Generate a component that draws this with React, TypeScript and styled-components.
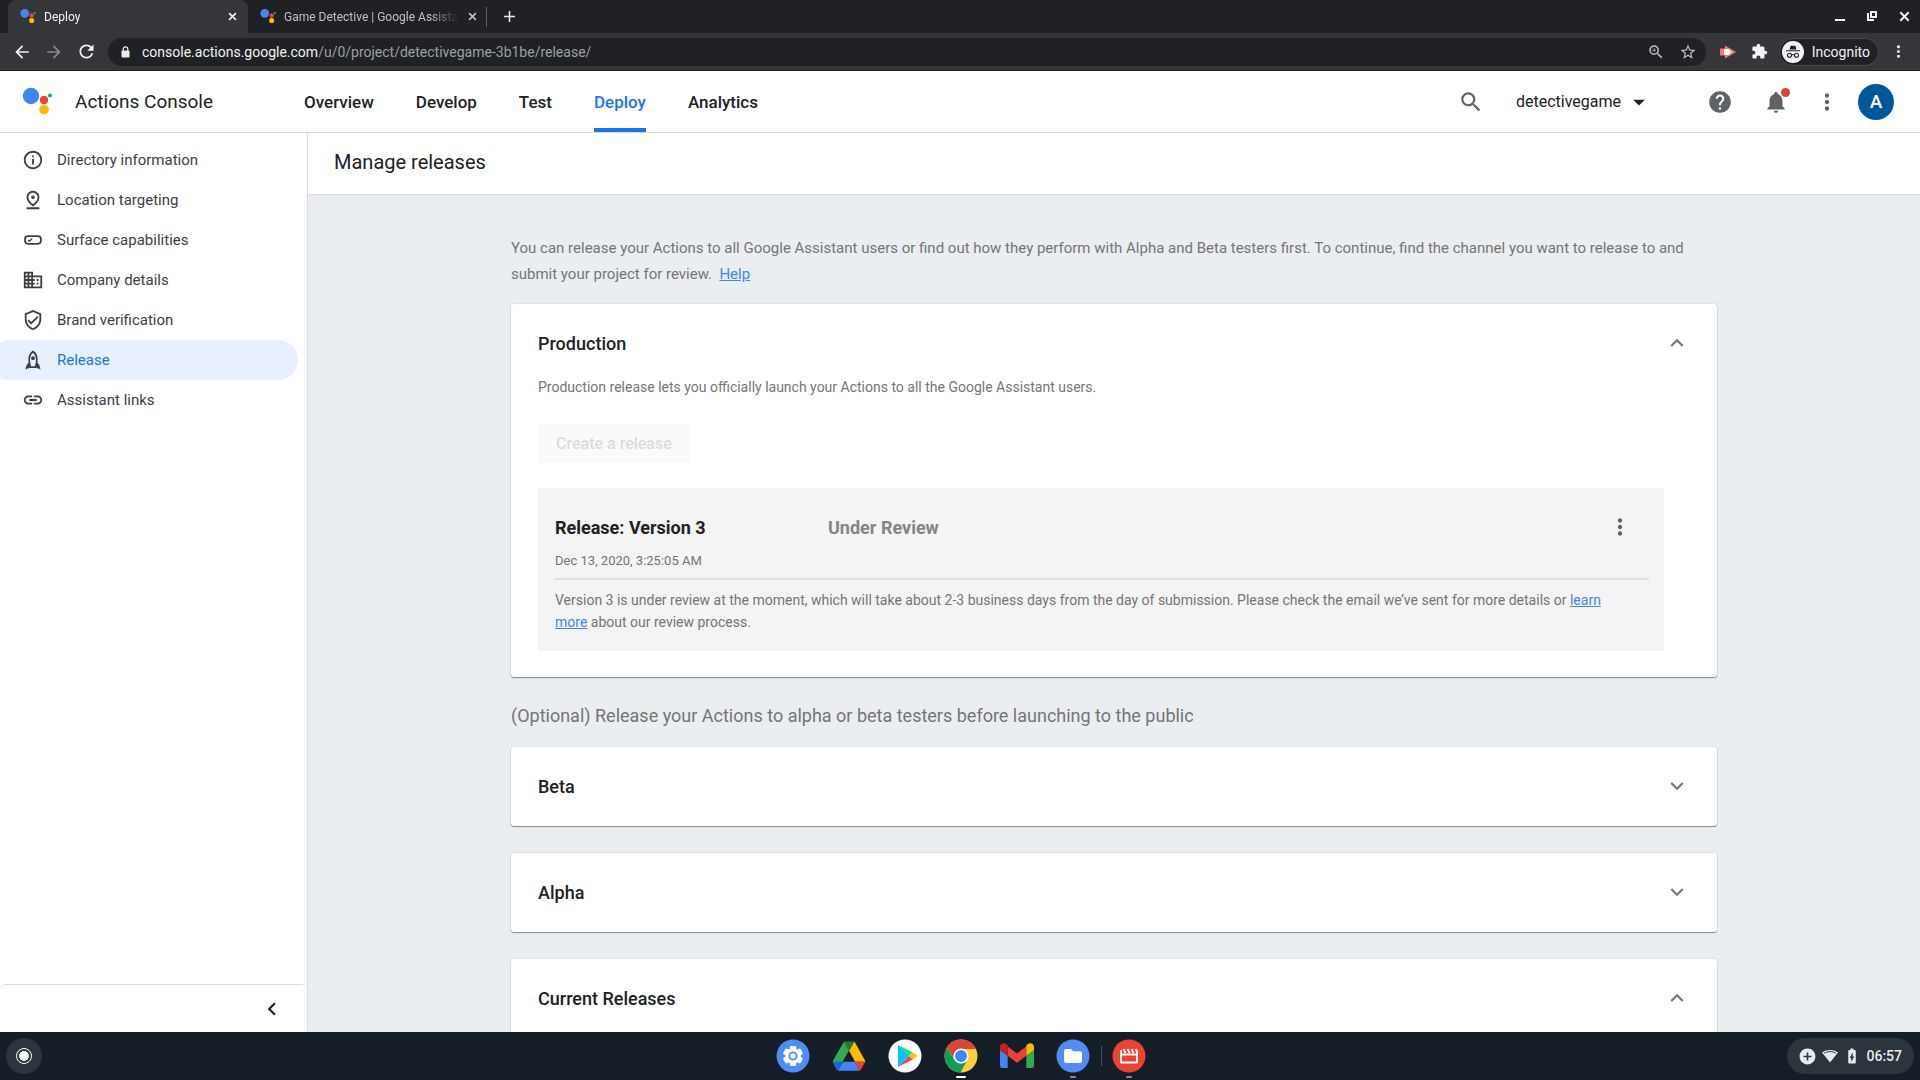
import React from "react";
import styled, { createGlobalStyle } from "styled-components";
import {
  MdInfoOutline, MdOutlinePinDrop, MdDomain, MdOutlineVerifiedUser, MdLink, MdHelp, MdNotifications,
  MdMoreVert, MdSearch, MdArrowDropDown, MdZoomIn, MdStarBorder, MdExtension, MdArrowBack,
  MdArrowForward, MdRefresh, MdAdd, MdExpandLess, MdExpandMore, MdChevronLeft,
  MdAddCircle, MdBatteryChargingFull,
} from "react-icons/md";

const Global = createGlobalStyle`
  * { box-sizing: border-box; }
  body { margin: 0; font-family: Roboto, "Liberation Sans", sans-serif; color: #202124; overflow: hidden; }
  h1, h2, p { margin: 0; }
  button { border: 0; padding: 0; background: none; color: inherit; font: inherit; }
  a { color: inherit; }
  svg { display: block; flex: none; }
`;

const Screen = styled.div`
  height: 100vh;
  display: flex;
  flex-direction: column;
`;

const IconButton = styled.button<{ $size?: number }>`
  flex: none;
  display: flex;
  align-items: center;
  justify-content: center;
  width: ${(p) => p.$size ?? 32}px;
  height: ${(p) => p.$size ?? 32}px;
`;

/* Browser window */
const TabStrip = styled.div`
  flex: none;
  display: flex;
  height: 33px;
  padding-left: 8px;
  background: #202124;
  color: #e8eaed;
`;
const Tab = styled.div<{ $active?: boolean }>`
  display: flex;
  align-items: center;
  gap: 7px;
  width: 240px;
  padding: 0 8px 0 12px;
  border-radius: 8px 8px 0 0;
  font-size: 12px;
  color: ${(p) => (p.$active ? "#f1f3f4" : "#bdc1c6")};
  background: ${(p) => (p.$active ? "#35363a" : "transparent")};
`;
const TabTitle = styled.span`
  flex: 1;
  white-space: nowrap;
  mask-image: linear-gradient(to right, #000 84%, transparent);
`;
const StripDivider = styled.i`
  align-self: center;
  width: 1px;
  height: 20px;
  margin: 0 6px 0 -2px;
  background: #5f6368;
`;
const WindowButtons = styled.div`
  display: flex;
  margin-left: auto;
  color: #f1f3f4;
`;
const Toolbar = styled.div`
  flex: none;
  display: flex;
  align-items: center;
  height: 38px;
  padding: 0 6px;
  background: #35363a;
  border-bottom: 1px solid #202124;
  color: #f1f3f4;
`;
const Address = styled.div`
  flex: 1;
  display: flex;
  align-items: center;
  height: 28px;
  margin: 0 6px;
  padding: 0 2px 0 13px;
  border-radius: 14px;
  background: #202124;
  font-size: 14px;
  color: #9aa0a6;
`;
const Url = styled.span`
  flex: 1;
  padding-left: 12px;
  b { font-weight: 400; color: #f1f3f4; }
`;
const AddressTools = styled.div`
  display: flex;
  color: #bdc1c6;
`;
const Incognito = styled.button`
  display: flex;
  align-items: center;
  gap: 8px;
  height: 28px;
  margin: 0 3px;
  padding: 0 8px 0 2px;
  border: 1px solid #46474b;
  border-radius: 14px;
  background: #202124;
  font-size: 14px;
`;

/* Console header */
const Header = styled.header`
  flex: none;
  display: flex;
  align-items: center;
  height: 62px;
  padding: 0 26px 0 22px;
  border-bottom: 1px solid #dadce0;
  background: #fff;
`;
const Product = styled.div`
  display: flex;
  align-items: center;
  gap: 21px;
  width: 282px;
  font-size: 19px;
`;
const Nav = styled.nav`
  flex: 1;
  display: flex;
  gap: 42px;
  height: 100%;
`;
const NavLink = styled.a<{ $active?: boolean }>`
  display: flex;
  align-items: center;
  border-bottom: 4px solid ${(p) => (p.$active ? "#1a73e8" : "transparent")};
  border-top: 4px solid transparent;
  font-size: 17px;
  font-weight: 500;
  text-decoration: none;
  color: ${(p) => (p.$active ? "#1a73e8" : "#202124")};
`;
const HeaderTools = styled.div`
  display: flex;
  align-items: center;
  gap: 15px;
  color: #5f6368;
`;
const ProjectMenu = styled.button`
  display: flex;
  align-items: center;
  gap: 4px;
  margin: 0 36px 0 14px;
  font-size: 16px;
  color: #202124;
`;
const Bell = styled.button`
  position: relative;
  width: 40px;
  height: 40px;
  margin-left: 5px;
  display: grid;
  place-items: center;
  &::after {
    content: "";
    position: absolute;
    top: 6px;
    right: 6px;
    width: 9px;
    height: 9px;
    border-radius: 50%;
    background: #db4437;
  }
`;
const Avatar = styled.button`
  width: 36px;
  height: 36px;
  border-radius: 50%;
  background: #01579b;
  color: #fff;
  font-size: 19px;
  font-weight: 500;
`;

/* Body */
const Body = styled.div`
  flex: 1;
  min-height: 0;
  display: flex;
`;
const Sidebar = styled.aside`
  flex: none;
  display: flex;
  flex-direction: column;
  width: 308px;
  border-right: 1px solid #dadce0;
  background: #fff;
`;
const SideList = styled.nav`
  flex: 1;
  padding: 7px 9px 0 0;
`;
const SideLink = styled.a<{ $active?: boolean }>`
  display: flex;
  align-items: center;
  gap: 13px;
  height: 40px;
  padding-left: 22px;
  border-radius: 6px 20px 20px 6px;
  background: ${(p) => (p.$active ? "#e8f0fe" : "transparent")};
  color: ${(p) => (p.$active ? "#1a73e8" : "#3c4043")};
  font-size: 15px;
  text-decoration: none;
  svg { color: #3c4043; }
`;
const SideFooter = styled.div`
  display: flex;
  justify-content: flex-end;
  align-items: center;
  height: 48px;
  padding-right: 19px;
  border-top: 1px solid #dadce0;
  border-radius: 6px 6px 0 0;
`;
const Main = styled.main`
  flex: 1;
  min-width: 0;
  display: flex;
  flex-direction: column;
`;
const TitleBar = styled.div`
  flex: none;
  height: 62px;
  padding: 0 26px;
  border-bottom: 1px solid #dadce0;
  background: #fff;
  h1 { font-size: 20px; line-height: 58px; font-weight: 400; }
`;
const Scroller = styled.div`
  flex: 1;
  overflow: hidden;
  padding: 40px 24px 0;
  background: #eaeef1;
`;
const Column = styled.div`
  max-width: 1206px;
  margin: 0 auto;
`;
const Intro = styled.p`
  margin-bottom: 17px;
  font-size: 15px;
  line-height: 26px;
  color: #757575;
`;
const TextLink = styled.a`
  color: #4285f4;
  text-decoration: underline;
`;
const Card = styled.section`
  margin-bottom: 27px;
  padding: 8px 26px 7px 27px;
  border-radius: 3px;
  background: #fff;
  box-shadow: 0 1px 1px rgba(0, 0, 0, 0.4), 0 0 2px rgba(0, 0, 0, 0.16);
`;
const CardHead = styled.div`
  display: flex;
  align-items: center;
  justify-content: space-between;
  height: 64px;
  padding-bottom: 2px;
  color: #757575;
  h2 { font-size: 18px; font-weight: 500; color: #202124; }
`;
const CardText = styled.p`
  font-size: 14px;
  line-height: 22px;
  color: #757575;
`;
const CreateButton = styled.button`
  height: 39px;
  margin: 26px 0 25px;
  padding: 0 18px;
  border-radius: 4px;
  background: #fafafa;
  color: #dadce0;
  font-size: 16px;
  font-weight: 500;
`;
const Release = styled.article`
  margin: 0 27px 19px 0;
  padding: 22px 15px 18px 17px;
  background: #f4f4f4;
`;
const ReleaseHead = styled.div`
  display: grid;
  grid-template-columns: 273px 1fr 32px;
  align-items: center;
  height: 34px;
  padding-right: 13px;
  color: #5f6368;
  font-size: 18px;
  font-weight: 700;
  h2 { font-size: 18px; font-weight: 700; color: #202124; }
  span { color: #80868b; }
`;
const ReleaseDate = styled.p`
  padding: 7px 0;
  border-bottom: 2px solid #e0e0e0;
  margin-bottom: 9px;
  font-size: 13px;
  line-height: 20px;
  color: #757575;
`;
const ReleaseNote = styled(CardText)`
  padding-right: 24px;
`;
const Optional = styled.p`
  margin-bottom: 20px;
  font-size: 18px;
  line-height: 23px;
  color: #757575;
`;

/* System shelf */
const Shelf = styled.footer`
  flex: none;
  display: grid;
  grid-template-columns: 1fr auto 1fr;
  align-items: center;
  height: 48px;
  padding: 0 6px;
  background: #151e27;
`;
const Launcher = styled.button`
  display: grid;
  place-items: center;
  width: 36px;
  height: 36px;
  border-radius: 50%;
  background: #2c353d;
`;
const Apps = styled.div`
  display: flex;
  align-items: center;
  padding-left: 2px;
`;
const AppButton = styled.button<{ $mark?: string }>`
  display: flex;
  flex-direction: column;
  align-items: center;
  width: 56px;
  height: 48px;
  padding-top: 7px;
  &::after {
    content: "";
    width: ${(p) => (p.$mark === "#fff" ? 10 : 6)}px;
    height: 2px;
    margin-top: 3px;
    border-radius: 1px;
    background: ${(p) => p.$mark ?? "transparent"};
  }
`;
const ShelfDivider = styled.i`
  width: 1px;
  height: 20px;
  margin-right: -1px;
  background: #454d54;
`;
const Status = styled.button`
  justify-self: end;
  display: flex;
  align-items: center;
  gap: 5px;
  height: 36px;
  padding: 0 12px 0 11px;
  border-radius: 18px;
  background: #2c353d;
  color: #e8eaed;
  font-size: 14px;
  font-weight: 500;
`;

const AssistantLogo = ({ size }: { size: number }) => (
  <svg width={size} height={size} viewBox="0 0 32 32">
    <circle cx="9" cy="10" r="8.200" fill="#4285f4" />
    <circle cx="22" cy="14" r="4.200" fill="#ea4335" />
    <circle cx="22" cy="23.500" r="4.800" fill="#fbbc04" />
    <circle cx="28" cy="9.500" r="2.100" fill="#34a853" />
  </svg>
);
const LockIcon = () => (
  <svg width="9" height="12" viewBox="0 0 9 12" fill="none">
    <path d="M2.200 5V3.200a2.300 2.300 0 0 1 4.600 0V5" stroke="#e8eaed" strokeWidth="1.200" />
    <rect x="0.500" y="4.500" width="8" height="7" rx="1" fill="#e8eaed" />
  </svg>
);
const CrossIcon = ({ size }: { size: number }) => (
  <svg width={size} height={size} viewBox="0 0 10 10" fill="none" stroke="currentColor" strokeWidth="1.800">
    <path d="M1.200 1.200l7.600 7.600M8.800 1.200L1.200 8.800" />
  </svg>
);
const SurfaceIcon = () => (
  <svg width="22" height="22" viewBox="0 0 22 22" fill="none" stroke="currentColor">
    <rect x="3" y="7.200" width="16" height="7.600" rx="3.200" strokeWidth="1.800" />
    <path d="M6 11l1.400 1.400L10.200 9.500" strokeWidth="1.200" />
  </svg>
);
const RocketIcon = () => (
  <svg width="22" height="22" viewBox="0 0 22 22" fill="none" stroke="currentColor">
    <path d="M11 2.500C8.600 4.400 7.200 7.200 7.200 10.500c0 3 .5 5.500 1.200 7.700h5.200c.7-2.200 1.200-4.700 1.200-7.700C14.800 7.200 13.400 4.400 11 2.500z" strokeWidth="1.700" />
    <circle cx="11" cy="9.200" r="1.900" fill="currentColor" stroke="none" />
    <path d="M6.800 13.500C5 15 3.900 17.200 3.500 20.500l1.500-.6.800-1.200.7 1 1.500-1.200zM15.200 13.500c1.800 1.500 2.900 3.700 3.300 7l-1.500-.6-.8-1.200-.7 1-1.500-1.200z" fill="currentColor" stroke="none" />
  </svg>
);
const MinimizeIcon = () => (
  <svg width="12" height="12" viewBox="0 0 12 12">
    <path d="M1 9h10v2H1z" fill="currentColor" />
  </svg>
);
const RestoreIcon = () => (
  <svg width="12" height="12" viewBox="0 0 12 12" fill="none" stroke="currentColor" strokeWidth="2">
    <path d="M5 2h5v5H5z" />
    <path d="M2 3v7h6" />
  </svg>
);
const IncognitoIcon = () => (
  <svg width="22" height="22" viewBox="0 0 22 22">
    <circle cx="11" cy="11" r="11" fill="#f1f3f4" />
    <path d="M7.500 8.500l1-3.300c.2-.6.700-.7 1.200-.5l1.300.3 1.300-.3c.5-.2 1 0 1.200.5l1 3.300zM4 9.300h14v1H4z" fill="#202124" />
    <g fill="none" stroke="#202124" strokeWidth="1.100">
      <circle cx="7.500" cy="14.300" r="2" />
      <circle cx="14.500" cy="14.300" r="2" />
      <path d="M9.500 14c1-.6 2-.6 3 0" />
    </g>
  </svg>
);
const ArrowExtension = () => (
  <svg width="16" height="14" viewBox="0 0 16 14">
    <path d="M0 3.500h5V.5L16 7 5 13.500v-3H0z" fill="#f0797c" />
    <path d="M4 4h5l4 3-4 3H4z" fill="#fff" />
    <path d="M9 3l7 4-7 4 1.500-4z" fill="#ea6a62" opacity=".5" />
  </svg>
);
const WifiIcon = () => (
  <svg width="16" height="16" viewBox="0 0 16 16">
    <path d="M0 4.500C4.500 1.200 11.500 1.200 16 4.500L8 14.500z" fill="#e8eaed" />
    <path d="M2 5.300c3.500-2.200 8.500-2.200 12 0" fill="none" stroke="#2c353d" strokeWidth="1" />
  </svg>
);
const SettingsApp = () => (
  <svg width="34" height="34" viewBox="0 0 34 34">
    <circle cx="17" cy="17" r="16.500" fill="#4f8df5" />
    <g fill="#fff">
      {[0, 60, 120].map((a) => (
        <rect key={a} x="13.800" y="7" width="6.400" height="20" rx="1.200" transform={`rotate(${a} 17 17)`} />
      ))}
      <circle cx="17" cy="17" r="7.800" />
    </g>
    <circle cx="17" cy="17" r="3.600" fill="#fff" stroke="#4f8df5" strokeWidth="1.800" />
  </svg>
);
const DriveApp = () => (
  <svg width="34" height="34" viewBox="0 0 34 34">
    <path d="M12 2.500h10.500L17 12z" fill="#188038" />
    <path d="M12 2.500L1 21.500q-.6 1 0 2l4.500 7.500L17 12z" fill="#34a853" />
    <path d="M22.500 2.500L33 21.500q.4.500.4 1.300H22.500L17 12z" fill="#fbbc04" />
    <path d="M.8 22.500h10.700L6 31.500q-1.200-.3-1.800-1.300z" fill="#1967d2" />
    <path d="M22.500 22.500h10.700q0 .6-.4 1.200l-3.600 6.200q-.7 1.200-1.700 1.600z" fill="#ea4335" />
    <path d="M11.500 22.500h11l5 9q-.5.300-1.300.3H7.500q-.8 0-1.500-.3z" fill="#4285f4" />
    <path d="M17 12l6 10.500H11z" fill="#151e27" />
  </svg>
);
const PlayApp = () => (
  <svg width="34" height="34" viewBox="0 0 34 34">
    <circle cx="17" cy="17" r="16.500" fill="#fff" />
    <path d="M10 6v22l11-11z" fill="#00c3ff" />
    <path d="M10 6l11 11 3.500-3.500z" fill="#00e676" />
    <path d="M10 28l11-11 3.500 3.500z" fill="#ef3e56" />
    <path d="M24.500 13.300L29.500 17l-5 3.700L21 17z" fill="#ffc107" />
  </svg>
);
const ChromeApp = () => (
  <svg width="34" height="34" viewBox="0 0 34 34">
    <circle cx="17" cy="17" r="16.500" fill="#ffcd40" />
    <path d="M2.700 8.800A16.500 16.500 0 0 1 32 10H17a7.500 7.500 0 0 0-7.200 9z" fill="#db4437" />
    <path d="M2.700 8.800A16.500 16.500 0 0 0 16.500 33.500l7-12.800a7.500 7.500 0 0 1-13 .1z" fill="#0f9d58" />
    <circle cx="17" cy="17" r="7.500" fill="#fff" />
    <circle cx="17" cy="17" r="6" fill="#4285f4" />
  </svg>
);
const GmailApp = () => (
  <svg width="34" height="34" viewBox="0 0 34 34">
    <path d="M0 11l7.700 5.800V29H2.300Q0 29 0 26.700z" fill="#4285f4" />
    <path d="M34 11l-7.700 5.800V29h5.400q2.300 0 2.300-2.300z" fill="#34a853" />
    <path d="M7.700 7.500L17 14.500l9.300-7v9.300L17 23.800l-9.300-7z" fill="#ea4335" />
    <path d="M0 11V8c0-3.400 3.600-4.700 6-3l1.700 1.300v10.500L0 11z" fill="#c5221f" />
    <path d="M34 11V8c0-3.400-3.600-4.700-6-3l-1.700 1.300v10.500L34 11z" fill="#fbbc04" />
  </svg>
);
const FilesApp = () => (
  <svg width="34" height="34" viewBox="0 0 34 34">
    <circle cx="17" cy="17" r="16.500" fill="#4f8df5" />
    <path d="M8 12q0-2 2-2h5l2.200 2.200H24q2 0 2 2V22q0 2-2 2H10q-2 0-2-2z" fill="#fff" />
  </svg>
);
const VideoApp = () => (
  <svg width="34" height="34" viewBox="0 0 34 34">
    <circle cx="17" cy="17" r="16.500" fill="#ea4335" />
    <path d="M9 11v12.500h16V11M9 15.500h16" fill="none" stroke="#fff" strokeWidth="1.800" strokeLinejoin="round" />
    <path d="M11.500 10l2 4M15.500 10l2 4M19.500 10l2 4M23.500 10l1.500 3" stroke="#fff" strokeWidth="1.800" />
  </svg>
);

const sideItems = [
  { label: "Directory information", icon: <MdInfoOutline size={22} /> },
  { label: "Location targeting", icon: <MdOutlinePinDrop size={22} /> },
  { label: "Surface capabilities", icon: <SurfaceIcon /> },
  { label: "Company details", icon: <MdDomain size={22} /> },
  { label: "Brand verification", icon: <MdOutlineVerifiedUser size={22} /> },
  { label: "Release", icon: <RocketIcon /> },
  { label: "Assistant links", icon: <MdLink size={22} /> },
];

const apps = [
  { name: "Settings", icon: <SettingsApp /> },
  { name: "Drive", icon: <DriveApp /> },
  { name: "Play Store", icon: <PlayApp /> },
  { name: "Chrome", icon: <ChromeApp />, mark: "#fff" },
  { name: "Gmail", icon: <GmailApp /> },
  { name: "Files", icon: <FilesApp />, mark: "#8a8f94" },
];

function Channel({ title, open, children }: { title: string; open?: boolean; children?: React.ReactNode }) {
  return (
    <Card>
      <CardHead>
        <h2>{title}</h2>
        <IconButton $size={28} aria-label={`Toggle ${title}`} aria-expanded={!!open}>
          {open ? <MdExpandLess size={26} /> : <MdExpandMore size={26} />}
        </IconButton>
      </CardHead>
      {children}
    </Card>
  );
}

export default function App() {
  return (
    <Screen>
      <Global />
      <TabStrip>
        <Tab $active>
          <AssistantLogo size={17} />
          <TabTitle>Deploy</TabTitle>
          <IconButton $size={16} aria-label="Close tab"><CrossIcon size={9} /></IconButton>
        </Tab>
        <Tab>
          <AssistantLogo size={17} />
          <TabTitle>Game Detective | Google Assista</TabTitle>
          <IconButton $size={16} aria-label="Close tab"><CrossIcon size={9} /></IconButton>
        </Tab>
        <StripDivider />
        <IconButton aria-label="New tab"><MdAdd size={19} /></IconButton>
        <WindowButtons>
          <IconButton aria-label="Minimize"><MinimizeIcon /></IconButton>
          <IconButton aria-label="Restore"><RestoreIcon /></IconButton>
          <IconButton aria-label="Close"><CrossIcon size={11} /></IconButton>
        </WindowButtons>
      </TabStrip>
      <Toolbar>
        <IconButton aria-label="Back"><MdArrowBack size={20} /></IconButton>
        <IconButton aria-label="Forward"><MdArrowForward size={20} color="#8a8b8e" /></IconButton>
        <IconButton aria-label="Reload"><MdRefresh size={21} /></IconButton>
        <Address>
          <LockIcon />
          <Url><b>console.actions.google.com</b>/u/0/project/detectivegame-3b1be/release/</Url>
          <AddressTools>
            <IconButton aria-label="Zoom"><MdZoomIn size={18} /></IconButton>
            <IconButton aria-label="Bookmark"><MdStarBorder size={18} /></IconButton>
          </AddressTools>
        </Address>
        <IconButton aria-label="Extension"><ArrowExtension /></IconButton>
        <IconButton aria-label="Extensions"><MdExtension size={17} /></IconButton>
        <Incognito><IncognitoIcon />Incognito</Incognito>
        <IconButton aria-label="Browser menu"><MdMoreVert size={19} /></IconButton>
      </Toolbar>

      <Header>
        <Product><AssistantLogo size={32} />Actions Console</Product>
        <Nav>
          {["Overview", "Develop", "Test", "Deploy", "Analytics"].map((n) => (
            <NavLink key={n} href="#" $active={n === "Deploy"}>{n}</NavLink>
          ))}
        </Nav>
        <HeaderTools>
          <IconButton aria-label="Search"><MdSearch size={26} /></IconButton>
          <ProjectMenu>detectivegame<MdArrowDropDown size={28} /></ProjectMenu>
          <IconButton aria-label="Help"><MdHelp size={26} /></IconButton>
          <Bell aria-label="Notifications"><MdNotifications size={26} /></Bell>
          <IconButton aria-label="More"><MdMoreVert size={26} /></IconButton>
          <Avatar>A</Avatar>
        </HeaderTools>
      </Header>

      <Body>
        <Sidebar>
          <SideList>
            {sideItems.map((s) => (
              <SideLink key={s.label} href="#" $active={s.label === "Release"}>{s.icon}{s.label}</SideLink>
            ))}
          </SideList>
          <SideFooter>
            <IconButton aria-label="Collapse menu"><MdChevronLeft size={26} /></IconButton>
          </SideFooter>
        </Sidebar>
        <Main>
          <TitleBar><h1>Manage releases</h1></TitleBar>
          <Scroller>
            <Column>
              <Intro>
                You can release your Actions to all Google Assistant users or find out how they perform with Alpha and Beta testers first. To continue, find the channel you want to release to and submit your project for review. &nbsp;<TextLink href="#">Help</TextLink>
              </Intro>
              <Channel title="Production" open>
                <CardText>Production release lets you officially launch your Actions to all the Google Assistant users.</CardText>
                <CreateButton disabled>Create a release</CreateButton>
                <Release>
                  <ReleaseHead>
                    <h2>Release: Version 3</h2>
                    <span>Under Review</span>
                    <IconButton aria-label="Release options"><MdMoreVert size={26} /></IconButton>
                  </ReleaseHead>
                  <ReleaseDate>Dec 13, 2020, 3:25:05 AM</ReleaseDate>
                  <ReleaseNote>
                    Version 3 is under review at the moment, which will take about 2-3 business days from the day of submission. Please check the email we’ve sent for more details or <TextLink href="#">learn more</TextLink> about our review process.
                  </ReleaseNote>
                </Release>
              </Channel>
              <Optional>(Optional) Release your Actions to alpha or beta testers before launching to the public</Optional>
              <Channel title="Beta" />
              <Channel title="Alpha" />
              <Channel title="Current Releases" open />
            </Column>
          </Scroller>
        </Main>
      </Body>

      <Shelf>
        <Launcher aria-label="Launcher">
          <svg width="18" height="18" viewBox="0 0 18 18">
            <circle cx="9" cy="9" r="7.500" fill="none" stroke="#fff" strokeWidth="1" />
            <circle cx="9" cy="9" r="5" fill="#fff" />
          </svg>
        </Launcher>
        <Apps>
          {apps.map((a) => (
            <AppButton key={a.name} aria-label={a.name} $mark={a.mark}>{a.icon}</AppButton>
          ))}
          <ShelfDivider />
          <AppButton aria-label="Video editor" $mark="#8a8f94"><VideoApp /></AppButton>
        </Apps>
        <Status>
          <MdAddCircle size={19} /><WifiIcon /><MdBatteryChargingFull size={18} />06:57
        </Status>
      </Shelf>
    </Screen>
  );
}
